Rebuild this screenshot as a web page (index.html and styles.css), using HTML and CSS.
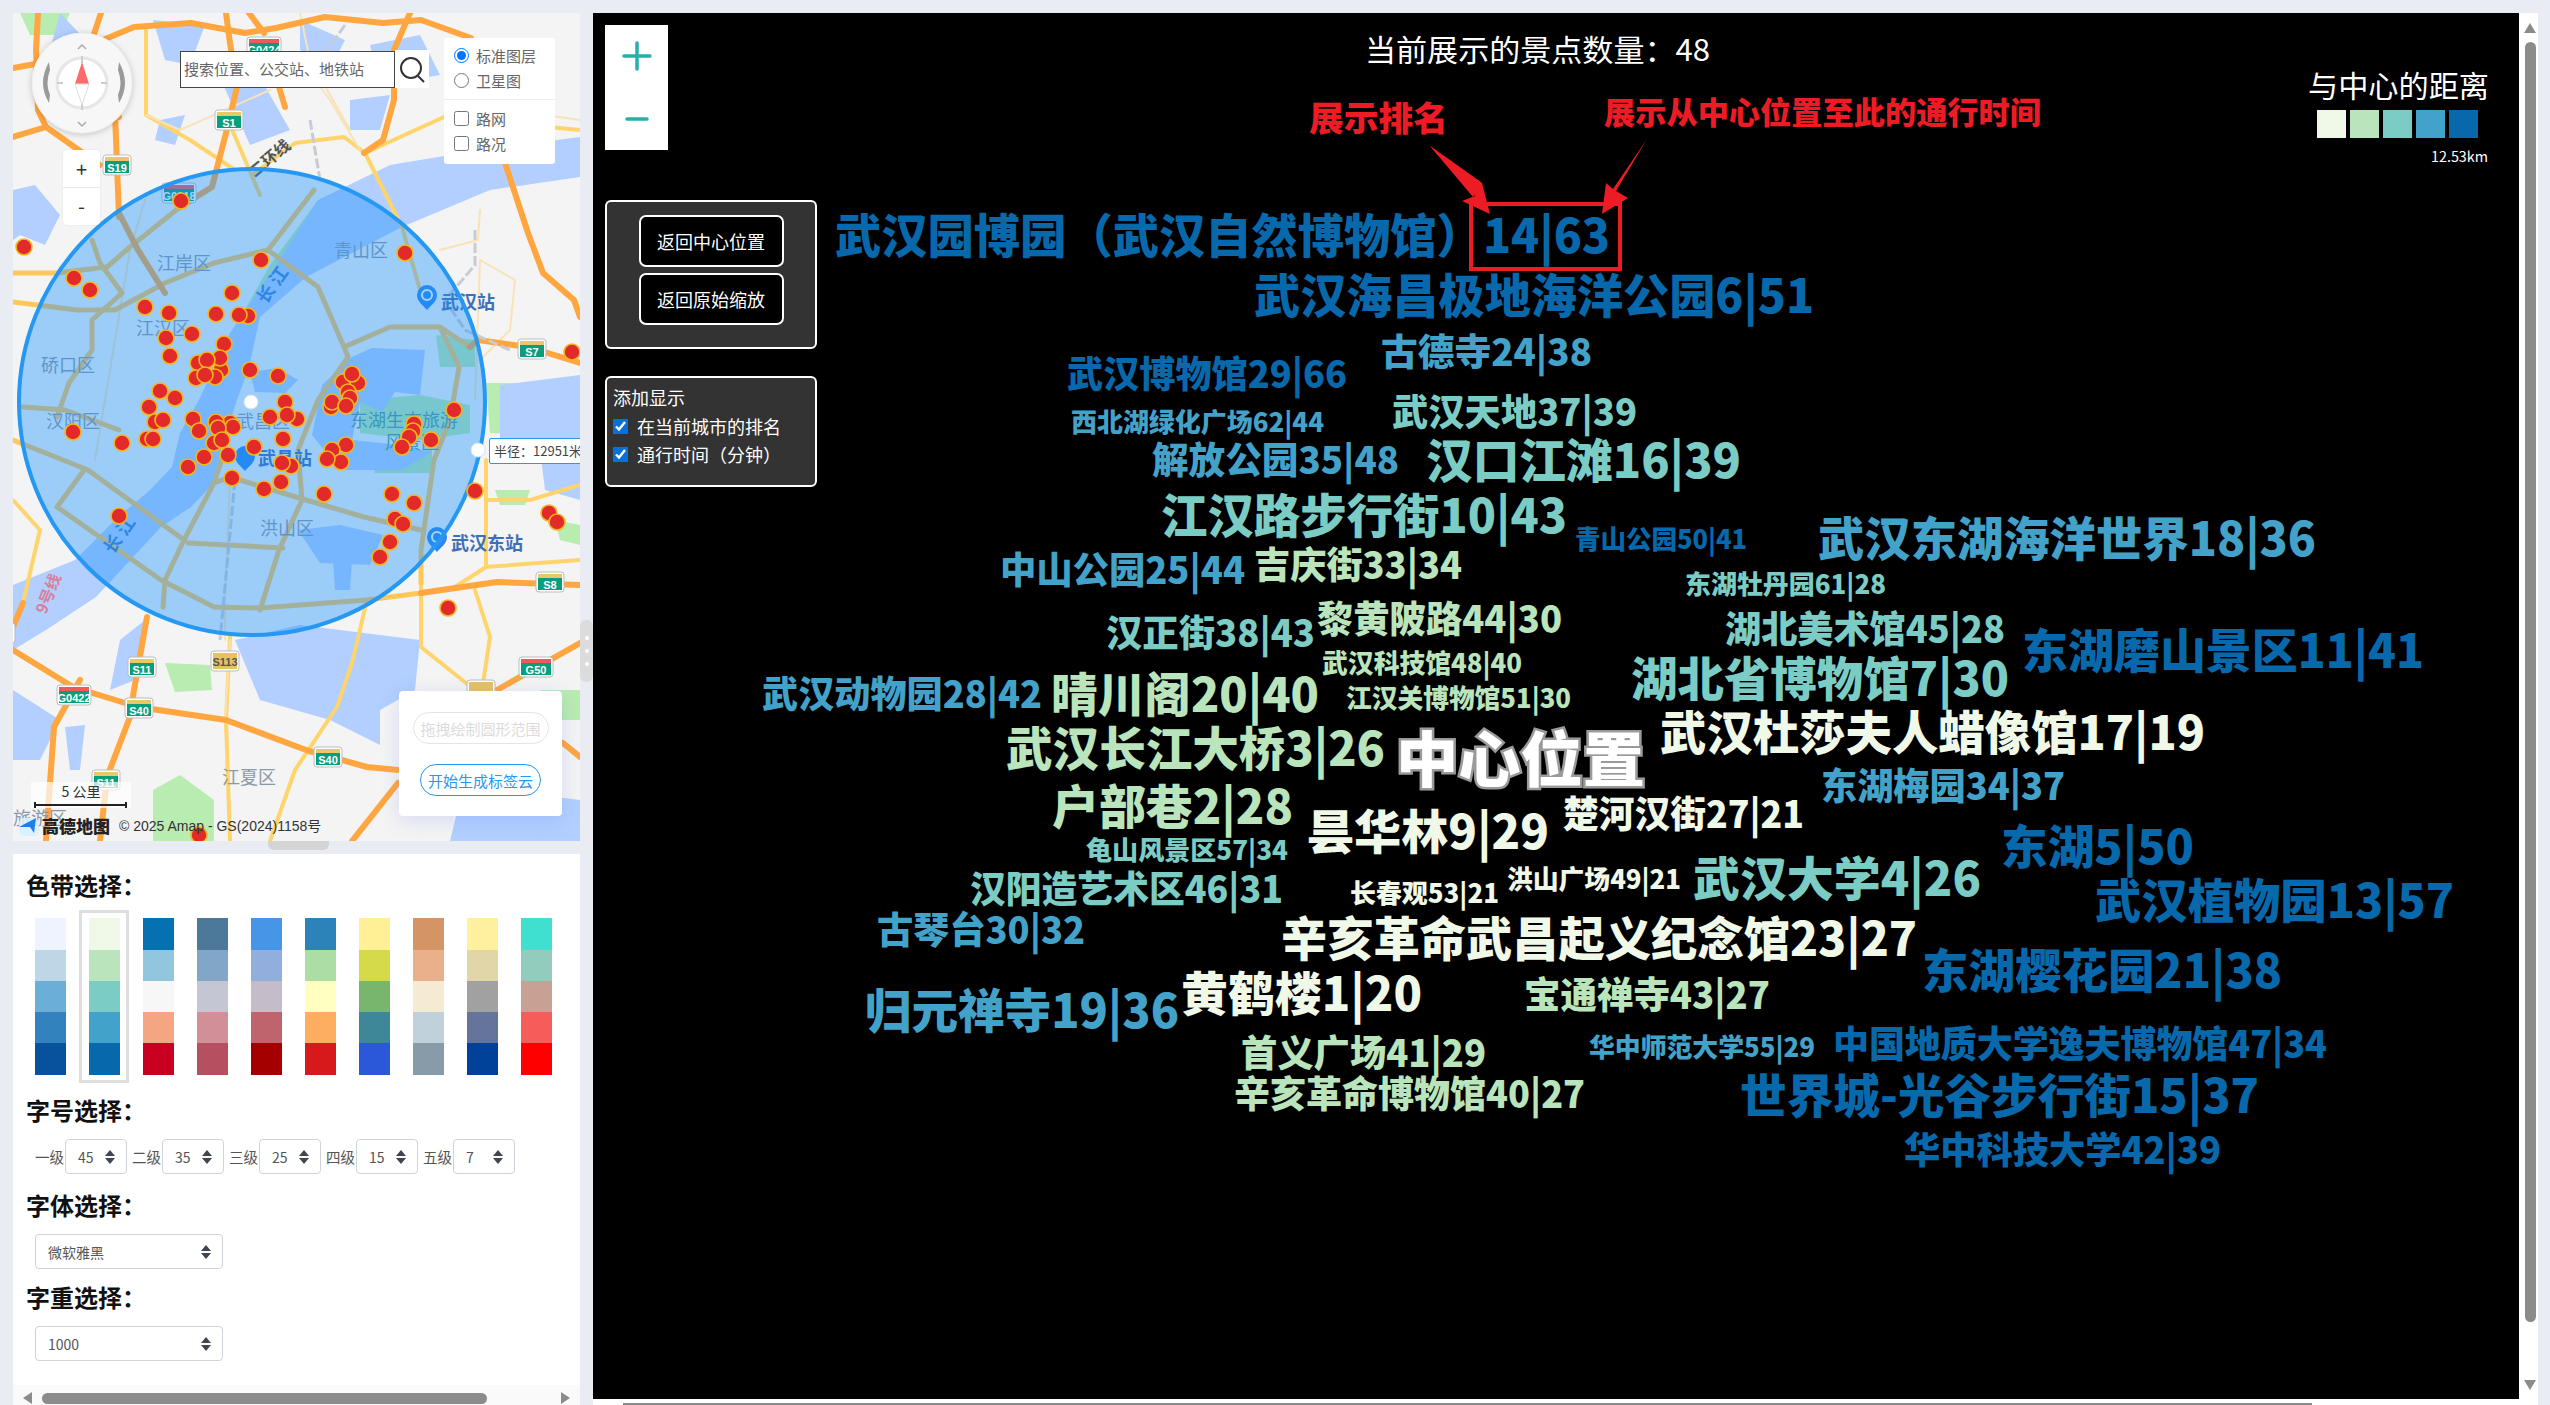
FILE: index.html
```html
<!DOCTYPE html>
<html lang="zh-CN">
<head>
<meta charset="utf-8">
<title>标签云</title>
<link rel="stylesheet" href="styles.css">
</head>
<body>
<div class="app">
  <div class="left">
    <div class="map">
      <svg class="map-svg" viewBox="13 13 567 828" width="567" height="828">
        <defs>
          <g id="sh-g"><rect class="sh-o" x="-14" y="-10" width="28" height="20" rx="3"/><rect class="sh-g" x="-12" y="-8" width="24" height="16"/><rect class="sh-y" x="-12" y="-8" width="24" height="4"/></g>
          <g id="sh-r"><rect class="sh-o" x="-17" y="-10" width="34" height="20" rx="3"/><rect class="sh-g" x="-15" y="-8" width="30" height="16"/><rect class="sh-r" x="-15" y="-8" width="30" height="4"/></g>
          <g id="sh-b"><rect class="sh-o" x="-14" y="-10" width="28" height="20" rx="3"/><rect class="sh-gold" x="-12" y="-8" width="24" height="16"/></g>
          <path id="pin" d="M0,13 C-3,9 -10,5 -10,-2 A10,10 0 1 1 10,-2 C10,5 3,9 0,13 Z"/>
        </defs>
        <rect class="land" x="13" y="13" width="567" height="828"/>
        <!-- 绿地 -->
        <path class="green" d="M486,383 L528,383 L535,412 L520,435 L490,433 Z M165,663 L210,665 L212,690 L175,692 Z M153,790 L180,775 L214,800 L214,841 L153,841 Z M540,690 L580,690 L580,720 L555,720 Z M495,490 L530,490 L525,505 L500,505 Z M555,520 L580,525 L580,545 L560,540 Z M20,13 L70,13 L60,35 L30,35 Z M318,200 L325,205 L285,268 L240,340 L228,340 L270,265 Z M360,400 L420,395 L470,405 L470,433 L420,440 L360,433 Z M436,335 L475,340 L475,367 L440,367 Z M364,450 L432,450 L432,473 L375,473 Z"/>
        <!-- 水系 -->
        <path class="water" d="M580,137 L480,150 L390,165 L318,200 L275,267 L230,333 L199,400 L180,433 L172,467 L150,490 L115,520 L75,560 L13,585 L13,650 L46,630 L96,597 L161,527 L191,507 L214,483 L226,433 L237,400 L249,367 L260,317 L306,277 L402,227 L490,190 L580,177 Z"/>
        <path class="water" d="M13,190 L35,185 L60,215 L45,245 L20,235 L13,240 Z M153,20 L205,25 L190,65 L165,60 Z M160,120 L185,115 L175,145 L155,140 Z M60,13 L105,60 L70,90 L50,50 Z M322,385 L352,357 L372,348 L425,350 L420,395 L395,392 L382,412 L360,402 L352,440 L400,445 L432,452 L402,470 L340,470 L312,435 Z M250,372 L278,368 L298,380 L285,393 L255,392 Z M298,530 L340,525 L383,535 L370,565 L320,563 Z M333,560 L352,560 L350,590 L335,590 Z M235,640 L300,625 L420,640 L415,690 L380,710 L380,745 L330,720 L260,700 Z M120,640 L145,620 L135,680 L110,690 Z M65,727 L85,725 L80,770 L70,770 Z M500,385 L580,375 L580,450 L530,460 L500,440 Z M460,800 L500,790 L580,800 L580,841 L450,841 Z M13,690 L60,720 L40,760 L13,760 Z M300,20 L345,40 L330,70 L300,50 Z M218,73 L250,60 L290,130 L250,145 Z M540,450 L580,460 L580,500 L545,490 Z M370,45 L420,35 L440,75 L380,85 Z M350,100 L390,95 L380,130 L350,130 Z"/>
        <!-- 道路 -->
        <g class="road-y">
          <path d="M230,637 L226,720 L230,841"/>
          <path d="M367,600 L352,663 L337,707 L295,770"/>
          <path d="M486,460 L486,567 L455,587"/>
          <path d="M475,590 L490,637 L482,690"/>
          <path d="M252,175 L295,143 L344,137 L365,153 L444,117 L580,130"/>
          <path d="M365,153 L402,227 L420,290"/>
          <path d="M146,27 L146,115 L190,140 L235,170"/>
          <path d="M421,583 L421,647 L471,687"/>
          <path d="M23,603 L40,530 L13,500"/>
          <path d="M486,500 L530,500 L580,485"/>
          <path d="M295,770 L270,841"/>
          <path d="M486,567 L580,560"/>
          <path d="M228,120 L260,195"/>
        </g>
        <g class="road-thin">
          <path d="M146,115 L180,130 L270,90"/>
          <path d="M230,480 L225,600 L225,640"/>
          <path d="M300,60 L330,100 L360,150"/>
          <path d="M95,460 L130,250 L145,200"/>
          <path d="M445,100 L510,110 L580,120"/>
          <path d="M440,250 L478,240 L480,210"/>
          <path d="M475,400 L480,260 L515,280 L510,330 L480,360"/>
          <path d="M300,13 L310,60 L350,130"/>
          <path d="M230,640 L225,720"/>
        </g>
        <g class="road-c">
          <path d="M180,207 L130,247 L107,267 L57,273 L13,273"/>
          <path d="M314,190 L268,250 L214,263 L165,283 L115,310 L77,310 L13,302"/>
          <path d="M92,240 L100,263 L122,293 L92,320 L92,350 L69,383 L57,417"/>
          <path d="M268,250 L318,287 L344,347 L348,357 L318,400 L298,450 L302,500 L279,550 L260,610"/>
          <path d="M344,347 L390,327 L440,327 L470,347"/>
          <path d="M440,327 L459,367 L450,420 L434,460 L421,550 L421,583"/>
          <path d="M23,407 L65,410 L119,430"/>
          <path d="M13,440 L38,450 L88,470 L184,540 L165,580 L163,607"/>
          <path d="M84,470 L57,507 L161,580 L214,607 L260,608 L367,600 L421,593"/>
          <path d="M188,543 L283,548"/>
          <path d="M214,483 L230,477 L306,500 L364,517 L421,530"/>
          <path d="M225,450 L214,483 L184,540"/>
        </g>
        <g class="road-o">
          <path d="M13,68 L46,62"/>
          <path d="M38,13 L36,50 L38,110 L46,127 L13,137"/>
          <path d="M46,127 L100,165"/>
          <path d="M101,13 L92,40 L103,40 L134,27 L191,23 L245,33 L276,28 L325,17 L383,23 L421,20 L471,38"/>
          <path d="M410,13 L394,50 L394,100 L383,140 L364,153"/>
          <path d="M226,13 L230,43 L237,87 L226,133 L212,187 L180,207"/>
          <path d="M249,13 L264,33"/>
          <path d="M279,87 L285,107"/>
          <path d="M119,117 L115,113 L119,217"/>
          <path d="M119,213 L138,250 L165,293"/>
          <path d="M470,347 L478,340 L528,347 L580,363"/>
          <path d="M421,593 L497,582 L580,585"/>
          <path d="M505,163 L528,233 L543,273 L574,300 L580,317"/>
          <path d="M13,650 L73,687 L138,707 L226,720 L306,750 L367,767 L398,770"/>
          <path d="M580,757 L563,743"/>
          <path d="M80,680 L54,727 L50,783 L46,841"/>
          <path d="M147,617 L134,690 L130,717 L107,777 L100,841"/>
          <path d="M580,643 L497,690 L470,720"/>
          <path d="M398,783 L352,841"/>
          <path d="M13,627 L23,603"/>
        </g>
        <path class="rail" d="M310,120 L320,180 M475,230 L475,265 L445,300 L465,330 L510,350 M235,480 L220,640 M345,25 L320,60"/>
        <!-- 地名 -->
        <text class="place" x="157" y="270">江岸区</text>
        <text class="place" x="334" y="257">青山区</text>
        <text class="place" x="136" y="335">江汉区</text>
        <text class="place" x="41" y="372">硚口区</text>
        <text class="place" x="46" y="428">汉阳区</text>
        <text class="place" x="260" y="535">洪山区</text>
        <text class="place" x="222" y="784">江夏区</text>
        <text class="place" x="13" y="825">旅游区</text>
        <text class="place-t" x="350" y="427">东湖生态旅游</text>
        <text class="place-t" x="385" y="449">风景区</text>
        <text class="place" x="236" y="428">武昌区</text>
        <text class="river" transform="translate(266,305) rotate(-55)">长 江</text>
        <text class="river" transform="translate(113,555) rotate(-55)">长 江</text>
        <text class="ring" transform="translate(255,178) rotate(-40)">二环线</text>
        <text class="metro" transform="translate(46,615) rotate(-68)">9号线</text>
        <use class="pin" href="#pin" x="427" y="297"/>
        <circle class="pin-c" cx="427" cy="295" r="5"/>
        <text class="station" x="441" y="309">武汉站</text>
        <use class="pin" href="#pin" x="245" y="458"/>
        <text class="station" x="258" y="465">武昌站</text>
        <use class="pin" href="#pin" x="437" y="539"/>
        <circle class="pin-c" cx="437" cy="537" r="5"/>
        <text class="station" x="451" y="550">武汉东站</text>
        <!-- 路牌 -->
        <g transform="translate(264,47)"><use href="#sh-r"/><text class="sh-t" y="7">G0424</text></g>
        <g transform="translate(229,120)"><use href="#sh-g"/><text class="sh-t" y="7">S1</text></g>
        <g transform="translate(117,165)"><use href="#sh-g"/><text class="sh-t" y="7">S19</text></g>
        <g transform="translate(179,193)"><use href="#sh-r"/><text class="sh-t" y="7">G0318</text></g>
        <g transform="translate(532,349)"><use href="#sh-g"/><text class="sh-t" y="7">S7</text></g>
        <g transform="translate(550,582)"><use href="#sh-g"/><text class="sh-t" y="7">S8</text></g>
        <g transform="translate(536,667)"><use href="#sh-r"/><text class="sh-t" y="7">G50</text></g>
        <g transform="translate(142,667)"><use href="#sh-g"/><text class="sh-t" y="7">S11</text></g>
        <g transform="translate(225,661)"><use href="#sh-b"/><text class="sh-k" y="5">S113</text></g>
        <g transform="translate(74,695)"><use href="#sh-r"/><text class="sh-t" y="7">G0422</text></g>
        <g transform="translate(139,708)"><use href="#sh-g"/><text class="sh-t" y="7">S40</text></g>
        <g transform="translate(328,757)"><use href="#sh-g"/><text class="sh-t" y="7">S40</text></g>
        <g transform="translate(106,780)"><use href="#sh-g"/><text class="sh-t" y="7">S11</text></g>
        <g transform="translate(481,690)"><use href="#sh-b"/></g>
        <g transform="translate(1,633)"><use href="#sh-g"/></g>
        <!-- 范围圆 -->
        <circle class="range" cx="252" cy="402" r="233"/>
        <!-- 景点 -->
        <g class="pois">
          <circle cx="181" cy="201" r="8"/><circle cx="24" cy="247" r="8"/><circle cx="261" cy="260" r="8"/><circle cx="405" cy="253" r="8"/><circle cx="74" cy="278" r="8"/><circle cx="90" cy="290" r="8"/><circle cx="232" cy="293" r="8"/><circle cx="145" cy="307" r="8"/><circle cx="169" cy="313" r="8"/><circle cx="216" cy="314" r="8"/><circle cx="248" cy="316" r="8"/><circle cx="239" cy="315" r="8"/><circle cx="166" cy="338" r="8"/><circle cx="192" cy="334" r="8"/><circle cx="224" cy="344" r="8"/><circle cx="170" cy="356" r="8"/><circle cx="221" cy="370" r="8"/><circle cx="198" cy="363" r="8"/><circle cx="220" cy="358" r="8"/><circle cx="207" cy="360" r="8"/><circle cx="196" cy="378" r="8"/><circle cx="215" cy="377" r="8"/><circle cx="205" cy="375" r="8"/><circle cx="250" cy="370" r="8"/><circle cx="278" cy="376" r="8"/><circle cx="343" cy="382" r="8"/><circle cx="358" cy="383" r="8"/><circle cx="352" cy="374" r="8"/><circle cx="348" cy="392" r="8"/><circle cx="350" cy="398" r="8"/><circle cx="331" cy="407" r="8"/><circle cx="332" cy="402" r="8"/><circle cx="346" cy="406" r="8"/><circle cx="160" cy="391" r="8"/><circle cx="175" cy="398" r="8"/><circle cx="149" cy="407" r="8"/><circle cx="285" cy="402" r="8"/><circle cx="454" cy="410" r="8"/><circle cx="572" cy="352" r="8"/><circle cx="193" cy="419" r="8"/><circle cx="155" cy="422" r="8"/><circle cx="163" cy="420" r="8"/><circle cx="230" cy="423" r="8"/><circle cx="233" cy="427" r="8"/><circle cx="216" cy="422" r="8"/><circle cx="218" cy="428" r="8"/><circle cx="270" cy="417" r="8"/><circle cx="297" cy="419" r="8"/><circle cx="287" cy="415" r="8"/><circle cx="199" cy="431" r="8"/><circle cx="73" cy="432" r="8"/><circle cx="414" cy="424" r="8"/><circle cx="413" cy="431" r="8"/><circle cx="409" cy="437" r="8"/><circle cx="431" cy="440" r="8"/><circle cx="283" cy="439" r="8"/><circle cx="147" cy="439" r="8"/><circle cx="153" cy="439" r="8"/><circle cx="122" cy="443" r="8"/><circle cx="254" cy="447" r="8"/><circle cx="214" cy="443" r="8"/><circle cx="222" cy="440" r="8"/><circle cx="346" cy="445" r="8"/><circle cx="332" cy="450" r="8"/><circle cx="402" cy="447" r="8"/><circle cx="188" cy="467" r="8"/><circle cx="204" cy="457" r="8"/><circle cx="228" cy="455" r="8"/><circle cx="291" cy="466" r="8"/><circle cx="282" cy="463" r="8"/><circle cx="341" cy="462" r="8"/><circle cx="327" cy="459" r="8"/><circle cx="232" cy="478" r="8"/><circle cx="264" cy="489" r="8"/><circle cx="281" cy="482" r="8"/><circle cx="324" cy="494" r="8"/><circle cx="392" cy="494" r="8"/><circle cx="414" cy="503" r="8"/><circle cx="475" cy="491" r="8"/><circle cx="549" cy="513" r="8"/><circle cx="557" cy="522" r="8"/><circle cx="119" cy="516" r="8"/><circle cx="395" cy="519" r="8"/><circle cx="403" cy="524" r="8"/><circle cx="390" cy="542" r="8"/><circle cx="380" cy="557" r="8"/><circle cx="448" cy="608" r="8"/><circle cx="199" cy="835" r="8"/>
        </g>
        <circle class="handle" cx="251" cy="402" r="7"/>
        <circle class="handle" cx="478" cy="450" r="7"/>
        <!-- 罗盘 -->
        <g transform="translate(82,83)">
          <circle class="cp-outer" r="50"/>
          <circle class="cp-inner" r="25"/>
          <path class="cp-tick" d="M0,-27 V-20 M0,20 V27 M-25,0 H-19 M19,0 H25"/>
          <path class="cp-n" d="M0,-21 L-7,1 H7 Z"/>
          <path class="cp-s" d="M0,22 L-7,1 H7 Z"/>
          <path class="cp-arc" d="M-33,-21 Q-45,0 -33,20 L-32,12 Q-37,0 -32,-13 Z"/>
          <path class="cp-arc" d="M37,-21 Q49,0 37,20 L36,12 Q41,0 36,-13 Z"/>
          <path class="cp-caret" d="M-4,-34 L0,-38 L4,-34 M-4,39 L0,43 L4,39"/>
        </g>
        <!-- 比例尺 -->
        <rect class="scale-bg" x="31" y="782" width="100" height="26"/>
        <text class="scale-t" x="81" y="797">5 公里</text>
        <path class="scale-l" d="M35,802 V808 M35,805 H126 M126,802 V808"/>
        <rect class="logo-bg" x="19" y="818" width="20" height="18" rx="5"/>
        <path class="logo-a" d="M36,818 L19,827 L30,827 L34,833 Z"/>
        <text class="logo-t" x="42" y="833">高德地图</text>
        <text class="copy" x="119" y="831">© 2025 Amap - GS(2024)1158号</text>
      </svg>

      <div class="search">
        <span class="search-text">搜索位置、公交站、地铁站</span>
        <span class="search-btn">
          <svg width="26" height="28" viewBox="0 0 26 28"><circle class="mag" cx="12" cy="13" r="10"/><path class="mag" d="M19,21 L25,27"/></svg>
        </span>
      </div>

      <div class="layers">
        <label class="layer"><input type="radio" name="base" checked>标准图层</label>
        <label class="layer"><input type="radio" name="base">卫星图</label>
        <div class="layer-sep"></div>
        <label class="layer"><input type="checkbox">路网</label>
        <label class="layer"><input type="checkbox">路况</label>
      </div>

      <div class="zoomer">
        <span class="zoomer-btn">+</span>
        <span class="zoomer-btn zoomer-minus">-</span>
      </div>

      <div class="radius">半径：12951米</div>

      <div class="actions">
        <button class="act act-off">拖拽绘制圆形范围</button>
        <button class="act act-on">开始生成标签云</button>
      </div>
    </div>

    <div class="h-grip"></div>

    <div class="panel">
      <div class="title first">色带选择：</div>
      <div class="ramps">
        <div class="ramp"><div class="bands"><i class="b1 p1a"></i><i class="p1b"></i><i class="p1c"></i><i class="p1d"></i><i class="b5 p1e"></i></div></div>
        <div class="ramp sel-ramp"><div class="bands"><i class="b1 p2a"></i><i class="p2b"></i><i class="p2c"></i><i class="p2d"></i><i class="b5 p2e"></i></div></div>
        <div class="ramp"><div class="bands"><i class="b1 p3a"></i><i class="p3b"></i><i class="p3c"></i><i class="p3d"></i><i class="b5 p3e"></i></div></div>
        <div class="ramp"><div class="bands"><i class="b1 p4a"></i><i class="p4b"></i><i class="p4c"></i><i class="p4d"></i><i class="b5 p4e"></i></div></div>
        <div class="ramp"><div class="bands"><i class="b1 p5a"></i><i class="p5b"></i><i class="p5c"></i><i class="p5d"></i><i class="b5 p5e"></i></div></div>
        <div class="ramp"><div class="bands"><i class="b1 p6a"></i><i class="p6b"></i><i class="p6c"></i><i class="p6d"></i><i class="b5 p6e"></i></div></div>
        <div class="ramp"><div class="bands"><i class="b1 p7a"></i><i class="p7b"></i><i class="p7c"></i><i class="p7d"></i><i class="b5 p7e"></i></div></div>
        <div class="ramp"><div class="bands"><i class="b1 p8a"></i><i class="p8b"></i><i class="p8c"></i><i class="p8d"></i><i class="b5 p8e"></i></div></div>
        <div class="ramp"><div class="bands"><i class="b1 p9a"></i><i class="p9b"></i><i class="p9c"></i><i class="p9d"></i><i class="b5 p9e"></i></div></div>
        <div class="ramp"><div class="bands"><i class="b1 p10a"></i><i class="p10b"></i><i class="p10c"></i><i class="p10d"></i><i class="b5 p10e"></i></div></div>
      </div>

      <div class="title t2">字号选择：</div>
      <div class="levels">
        <div class="level"><span class="lv">一级</span><span class="pick pick-s"><select><option>45</option></select></span></div>
        <div class="level"><span class="lv">二级</span><span class="pick pick-s"><select><option>35</option></select></span></div>
        <div class="level"><span class="lv">三级</span><span class="pick pick-s"><select><option>25</option></select></span></div>
        <div class="level"><span class="lv">四级</span><span class="pick pick-s"><select><option>15</option></select></span></div>
        <div class="level"><span class="lv">五级</span><span class="pick pick-s"><select><option>7</option></select></span></div>
      </div>

      <div class="title t3">字体选择：</div>
      <div class="block b3"><span class="pick pick-l"><select><option>微软雅黑</option></select></span></div>

      <div class="title t4">字重选择：</div>
      <div class="block b4"><span class="pick pick-l"><select><option>1000</option></select></span></div>

      <div class="hbar">
        <span class="tri-l"></span>
        <span class="hbar-thumb"></span>
        <span class="tri-r"></span>
      </div>
    </div>
  </div>

  <div class="v-grip"><i></i><i></i><i></i></div>

  <div class="right">
    <div class="right-row">
      <div class="cloud">
        <svg class="cloud-svg" viewBox="594 12 1926 1386" width="1926" height="1386">
          <text class="count" x="1366" y="60" textLength="345" lengthAdjust="spacingAndGlyphs">当前展示的景点数量：48</text>
          <text class="legend" x="2309" y="96" textLength="181" lengthAdjust="spacingAndGlyphs">与中心的距离</text>
          <rect class="c1" x="2318" y="109" width="29" height="28"/>
          <rect class="c2" x="2351" y="109" width="29" height="28"/>
          <rect class="c3" x="2384" y="109" width="29" height="28"/>
          <rect class="c4" x="2417" y="109" width="29" height="28"/>
          <rect class="c5" x="2450" y="109" width="29" height="28"/>
          <text class="legend-km" x="2432" y="161" textLength="57" lengthAdjust="spacingAndGlyphs">12.53km</text>

          <text class="note" x="1310" y="130" textLength="139" lengthAdjust="spacingAndGlyphs">展示排名</text>
          <text class="note note-s" x="1605" y="123" textLength="437" lengthAdjust="spacingAndGlyphs">展示从中心位置至此的通行时间</text>
          <rect class="note-box" x="1472" y="203" width="149" height="65"/>
          <path class="note-arrow" d="M1431,145 L1483,182 L1491,213 L1463,200 L1476,195 Z"/>
          <path class="note-arrow" d="M1431,145 L1474,196 L1483,182 Z"/>
          <path class="note-arrow" d="M1648,138 L1617,190 L1629,197 L1603,213 L1607,182 L1614,188 Z"/>

          <text class="w f47 c5" x="836" y="252" textLength="775" lengthAdjust="spacingAndGlyphs">武汉园博园（武汉自然博物馆）14|63</text>
          <text class="w f47 c5" x="1255" y="312" textLength="560" lengthAdjust="spacingAndGlyphs">武汉海昌极地海洋公园6|51</text>
          <text class="w f37 c4" x="1382" y="365" textLength="211" lengthAdjust="spacingAndGlyphs">古德寺24|38</text>
          <text class="w f37 c5" x="1068" y="387" textLength="280" lengthAdjust="spacingAndGlyphs">武汉博物馆29|66</text>
          <text class="w f26 c4" x="1072" y="431" textLength="253" lengthAdjust="spacingAndGlyphs">西北湖绿化广场62|44</text>
          <text class="w f37 c3" x="1393" y="425" textLength="245" lengthAdjust="spacingAndGlyphs">武汉天地37|39</text>
          <text class="w f37 c4" x="1153" y="473" textLength="247" lengthAdjust="spacingAndGlyphs">解放公园35|48</text>
          <text class="w f47 c3" x="1427" y="477" textLength="315" lengthAdjust="spacingAndGlyphs">汉口江滩16|39</text>
          <text class="w f47 c3" x="1162" y="532" textLength="406" lengthAdjust="spacingAndGlyphs">江汉路步行街10|43</text>
          <text class="w f26 c5" x="1576" y="548" textLength="172" lengthAdjust="spacingAndGlyphs">青山公园50|41</text>
          <text class="w f47 c4" x="1819" y="555" textLength="498" lengthAdjust="spacingAndGlyphs">武汉东湖海洋世界18|36</text>
          <text class="w f37 c4" x="1001" y="583" textLength="245" lengthAdjust="spacingAndGlyphs">中山公园25|44</text>
          <text class="w f37 c2" x="1255" y="578" textLength="208" lengthAdjust="spacingAndGlyphs">吉庆街33|34</text>
          <text class="w f26 c3" x="1686" y="593" textLength="201" lengthAdjust="spacingAndGlyphs">东湖牡丹园61|28</text>
          <text class="w f37 c3" x="1107" y="646" textLength="209" lengthAdjust="spacingAndGlyphs">汉正街38|43</text>
          <text class="w f37 c2" x="1318" y="632" textLength="245" lengthAdjust="spacingAndGlyphs">黎黄陂路44|30</text>
          <text class="w f37 c3" x="1726" y="642" textLength="280" lengthAdjust="spacingAndGlyphs">湖北美术馆45|28</text>
          <text class="w f47 c5" x="2023" y="667" textLength="402" lengthAdjust="spacingAndGlyphs">东湖磨山景区11|41</text>
          <text class="w f26 c2" x="1323" y="672" textLength="200" lengthAdjust="spacingAndGlyphs">武汉科技馆48|40</text>
          <text class="w f47 c3" x="1632" y="695" textLength="378" lengthAdjust="spacingAndGlyphs">湖北省博物馆7|30</text>
          <text class="w f37 c4" x="763" y="707" textLength="280" lengthAdjust="spacingAndGlyphs">武汉动物园28|42</text>
          <text class="w f47 c2" x="1052" y="711" textLength="268" lengthAdjust="spacingAndGlyphs">晴川阁20|40</text>
          <text class="w f26 c2" x="1347" y="707" textLength="225" lengthAdjust="spacingAndGlyphs">江汉关博物馆51|30</text>
          <text class="w f47 c2" x="1007" y="765" textLength="379" lengthAdjust="spacingAndGlyphs">武汉长江大桥3|26</text>
          <text class="center-w" x="1397" y="781" textLength="249" lengthAdjust="spacingAndGlyphs">中心位置</text>
          <text class="w f47 c1" x="1661" y="749" textLength="545" lengthAdjust="spacingAndGlyphs">武汉杜莎夫人蜡像馆17|19</text>
          <text class="w f37 c4" x="1822" y="799" textLength="244" lengthAdjust="spacingAndGlyphs">东湖梅园34|37</text>
          <text class="w f47 c2" x="1053" y="823" textLength="241" lengthAdjust="spacingAndGlyphs">户部巷2|28</text>
          <text class="w f37 c1" x="1564" y="827" textLength="241" lengthAdjust="spacingAndGlyphs">楚河汉街27|21</text>
          <text class="w f47 c1" x="1308" y="848" textLength="242" lengthAdjust="spacingAndGlyphs">昙华林9|29</text>
          <text class="w f26 c3" x="1087" y="859" textLength="202" lengthAdjust="spacingAndGlyphs">龟山风景区57|34</text>
          <text class="w f47 c5" x="2002" y="863" textLength="193" lengthAdjust="spacingAndGlyphs">东湖5|50</text>
          <text class="w f26 c1" x="1508" y="888" textLength="174" lengthAdjust="spacingAndGlyphs">洪山广场49|21</text>
          <text class="w f47 c3" x="1694" y="895" textLength="288" lengthAdjust="spacingAndGlyphs">武汉大学4|26</text>
          <text class="w f37 c3" x="971" y="902" textLength="313" lengthAdjust="spacingAndGlyphs">汉阳造艺术区46|31</text>
          <text class="w f26 c1" x="1351" y="902" textLength="149" lengthAdjust="spacingAndGlyphs">长春观53|21</text>
          <text class="w f47 c5" x="2096" y="917" textLength="359" lengthAdjust="spacingAndGlyphs">武汉植物园13|57</text>
          <text class="w f37 c4" x="878" y="943" textLength="208" lengthAdjust="spacingAndGlyphs">古琴台30|32</text>
          <text class="w f47 c1" x="1282" y="955" textLength="636" lengthAdjust="spacingAndGlyphs">辛亥革命武昌起义纪念馆23|27</text>
          <text class="w f47 c5" x="1923" y="987" textLength="360" lengthAdjust="spacingAndGlyphs">东湖樱花园21|38</text>
          <text class="w f37 c2" x="1525" y="1008" textLength="246" lengthAdjust="spacingAndGlyphs">宝通禅寺43|27</text>
          <text class="w f47 c1" x="1182" y="1010" textLength="241" lengthAdjust="spacingAndGlyphs">黄鹤楼1|20</text>
          <text class="w f47 c4" x="866" y="1027" textLength="314" lengthAdjust="spacingAndGlyphs">归元禅寺19|36</text>
          <text class="w f26 c4" x="1590" y="1056" textLength="226" lengthAdjust="spacingAndGlyphs">华中师范大学55|29</text>
          <text class="w f37 c5" x="1834" y="1057" textLength="494" lengthAdjust="spacingAndGlyphs">中国地质大学逸夫博物馆47|34</text>
          <text class="w f37 c2" x="1242" y="1066" textLength="245" lengthAdjust="spacingAndGlyphs">首义广场41|29</text>
          <text class="w f37 c2" x="1235" y="1107" textLength="351" lengthAdjust="spacingAndGlyphs">辛亥革命博物馆40|27</text>
          <text class="w f47 c5" x="1741" y="1112" textLength="519" lengthAdjust="spacingAndGlyphs">世界城-光谷步行街15|37</text>
          <text class="w f37 c5" x="1905" y="1163" textLength="317" lengthAdjust="spacingAndGlyphs">华中科技大学42|39</text>
        </svg>

        <div class="cloud-zoom">
          <span class="cz-btn"><svg width="30" height="30" viewBox="0 0 30 30"><path class="cz-icon" d="M15,2 V28 M2,15 H28"/></svg></span>
          <span class="cz-btn"><svg width="30" height="30" viewBox="0 0 30 30"><path class="cz-icon" d="M5,15 H25"/></svg></span>
        </div>

        <div class="cloud-tools">
          <div class="tool-box tool-buttons">
            <button class="tool-btn">返回中心位置</button>
            <button class="tool-btn">返回原始缩放</button>
          </div>
          <div class="tool-box tool-checks">
            <div class="tool-head">添加显示</div>
            <label class="tool-check"><input type="checkbox" checked>在当前城市的排名</label>
            <label class="tool-check"><input type="checkbox" checked>通行时间（分钟）</label>
          </div>
        </div>
      </div>
      <div class="vbar">
        <span class="tri-u"></span>
        <span class="vbar-thumb"></span>
        <span class="tri-d"></span>
      </div>
    </div>
    <div class="cloud-hbar"><span class="cloud-hbar-thumb"></span></div>
  </div>
</div>
</body>
</html>
```

FILE: styles.css
```css
* { box-sizing: border-box; }
html, body { margin: 0; height: 100%; overflow: hidden; }
body {
  background: #e9edf3;
  font-family: "Noto Sans CJK SC", "Liberation Sans", sans-serif;
  color: #111;
}
.app { display: flex; height: 1405px; padding: 13px 12px 0 13px; }
.left { width: 567px; display: flex; flex-direction: column; flex: none; }
.map { position: relative; width: 567px; height: 828px; overflow: hidden; flex: none; background: #f4f4f4; }
.map-svg { display: block; }

.land { fill: #f4f4f4; }
.green { fill: #b8ecb0; }
.water { fill: #b2cfff; }
.road-o path, .road-y path, .road-thin path, .road-c path { fill: none; stroke-linecap: round; stroke-linejoin: round; }
.road-o path { stroke: #ffa640; stroke-width: 6; }
.road-y path { stroke: #ffd46a; stroke-width: 4; }
.road-c path { stroke: #ffc75a; stroke-width: 5; }
.road-thin path { stroke: #f8e3b8; stroke-width: 2; }
.rail { fill: none; stroke: #c8ccd2; stroke-width: 3; stroke-dasharray: 10 3; }
.place { font-size: 18px; fill: #8d98a6; }
.place-t { font-size: 18px; fill: #4d9a96; }
.river { font-size: 18px; font-weight: 700; fill: #3b7fd0; }
.ring { font-size: 16px; font-weight: 700; fill: #555; }
.metro { font-size: 16px; font-weight: 700; fill: #d97f9c; }
.station { font-size: 18px; font-weight: 700; fill: #3d6fb8; }
.pin { fill: #2f86ee; }
.pin-c { fill: none; stroke: #fff; stroke-width: 2; }
.sh-o { fill: #fff; stroke: #b9bcc0; stroke-width: 1; }
.sh-g { fill: #0a9d7c; }
.sh-y { fill: #e8c868; }
.sh-r { fill: #ee5a5a; }
.sh-gold { fill: #e7c260; }
.sh-t { font-family: "Liberation Sans", sans-serif; font-size: 11px; font-weight: 700; fill: #fff; text-anchor: middle; }
.sh-k { font-family: "Liberation Sans", sans-serif; font-size: 11px; font-weight: 700; fill: #555; text-anchor: middle; }
.range { fill: #1890ff; fill-opacity: .4; stroke: #2598f3; stroke-width: 4; }
.pois circle { fill: #e22a2a; stroke: #f2b71f; stroke-width: 1.6; }
.handle { fill: #fff; stroke: #cfe4fb; stroke-width: 1; }
.cp-outer { fill: #f7f7f7; stroke: #eee; stroke-width: 1; filter: drop-shadow(0 1px 3px rgba(0,0,0,.2)); }
.cp-inner { fill: #fff; stroke: #e6e6e6; stroke-width: 3; }
.cp-tick { fill: none; stroke: #ccc; stroke-width: 2; }
.cp-n { fill: #ff6a6a; }
.cp-s { fill: #fff; stroke: #ddd; stroke-width: 1; }
.cp-arc { fill: #9a9a9a; }
.cp-caret { fill: none; stroke: #aaa; stroke-width: 1.5; }
.scale-bg { fill: #fff; fill-opacity: .7; }
.scale-t { font-size: 14px; fill: #333; text-anchor: middle; }
.scale-l { fill: none; stroke: #222; stroke-width: 2; }
.logo-bg { fill: #d9f1ff; fill-opacity: .9; }
.logo-a { fill: #1b7ff0; }
.logo-t { font-size: 17px; font-weight: 900; fill: #222; }
.copy { font-family: "Liberation Sans", "Noto Sans CJK SC", sans-serif; font-size: 14px; fill: #333; }

.search { position: absolute; left: 167px; top: 37px; display: flex; height: 38px; }
.search-text {
  width: 215px; height: 37px; margin-top: 1px;
  background: #fff; border: 1px solid #444; font-size: 15px; line-height: 34px; padding-left: 3px; color: #666;
  white-space: nowrap; overflow: hidden;
}
.search-btn { width: 34px; background: #fff; display: flex; align-items: center; justify-content: center; }
.mag { fill: none; stroke: #333; stroke-width: 2; }

.layers {
  position: absolute; left: 431px; top: 25px; width: 111px; height: 126px;
  background: #fff; border-radius: 3px; padding: 5px 0 0 10px;
}
.layer { display: flex; align-items: center; gap: 7px; height: 25px; font-size: 15px; color: #666; }
.layer input { margin: 0; width: 15px; height: 15px; flex: none; }
.layer-sep { height: 1px; background: #eee; margin: 6px 0 6px -10px; }

.zoomer {
  position: absolute; left: 50px; top: 137px; width: 37px; height: 75px;
  background: #fff; border-radius: 4px; display: flex; flex-direction: column; box-shadow: 0 0 2px rgba(0,0,0,.1);
}
.zoomer-btn { height: 37px; display: flex; align-items: center; justify-content: center; font-size: 20px; line-height: 1; color: #333; }
.zoomer-minus { border-top: 1px solid #e8e8e8; }

.radius {
  position: absolute; left: 476px; top: 425px; width: 110px; height: 26px;
  background: #fff; border: 1px solid #2598f3; border-radius: 2px; font-size: 13px; line-height: 24px; padding-left: 4px;
  color: #444; white-space: nowrap;
}

.actions {
  position: absolute; left: 386px; top: 678px; width: 163px; height: 125px;
  background: #fff; border-radius: 4px; box-shadow: 0 4px 20px rgba(90,110,230,.2);
  display: flex; flex-direction: column; align-items: center; padding-top: 21px; gap: 20px;
}
.act { height: 32px; border-radius: 16px; background: #fff; font: 15px "Noto Sans CJK SC", sans-serif; padding: 0; }
.act-off { width: 136px; border: 1px solid #e4e4e4; color: #dcdcdc; }
.act-on { width: 121px; border: 1px solid #2598f3; color: #2598f3; }

.h-grip { height: 13px; flex: none; position: relative; }
.h-grip::after {
  content: ""; position: absolute; left: 255px; top: 0; width: 61px; height: 9px;
  background: #d4d4d4; border-radius: 0 0 6px 6px;
}

.panel { background: #fff; flex: 1; position: relative; padding: 14px 0 0 13px; overflow: hidden; }
.title { height: 34px; line-height: 34px; font-size: 24px; font-weight: 700; color: #111; white-space: nowrap; }
.t2 { margin-top: 10px; }
.t3 { margin-top: 14px; }
.t4 { margin-top: 11px; }
.ramps { display: flex; gap: 4px; margin: 8px 0 0 -1px; }
.ramp { width: 50px; height: 173px; border: 3px solid transparent; display: flex; justify-content: center; padding-top: 5px; }
.sel-ramp { border-color: #dedede; }
.bands { width: 31px; display: flex; flex-direction: column; }
.bands i { display: block; height: 31px; }
.bands .b1, .bands .b5 { height: 32px; }

.p1a { background: #eff3ff; } .p1b { background: #bdd7e7; } .p1c { background: #6baed6; } .p1d { background: #3182bd; } .p1e { background: #08519c; }
.p2a { background: #f0f9e8; } .p2b { background: #bae4bc; } .p2c { background: #7bccc4; } .p2d { background: #43a2ca; } .p2e { background: #0868ac; }
.p3a { background: #0571b0; } .p3b { background: #92c5de; } .p3c { background: #f7f7f7; } .p3d { background: #f4a582; } .p3e { background: #ca0020; }
.p4a { background: #4c7899; } .p4b { background: #82a6c7; } .p4c { background: #c4c6d4; } .p4d { background: #d38f98; } .p4e { background: #b4505f; }
.p5a { background: #4695e6; } .p5b { background: #92aedc; } .p5c { background: #c4bdc9; } .p5d { background: #bf636c; } .p5e { background: #a50000; }
.p6a { background: #2b83ba; } .p6b { background: #abdda4; } .p6c { background: #ffffbf; } .p6d { background: #fdae61; } .p6e { background: #d7191c; }
.p7a { background: #fff095; } .p7b { background: #d5da4a; } .p7c { background: #78b56d; } .p7d { background: #3e8798; } .p7e { background: #2b57d9; }
.p8a { background: #d49466; } .p8b { background: #e9b08c; } .p8c { background: #f5ebd3; } .p8d { background: #c1d1db; } .p8e { background: #879ca8; }
.p9a { background: #fff0a0; } .p9b { background: #e0d6a8; } .p9c { background: #a1a1a1; } .p9d { background: #65749b; } .p9e { background: #00429a; }
.p10a { background: #40e0d0; } .p10b { background: #92ccbd; } .p10c { background: #c8a194; } .p10d { background: #f45d5a; } .p10e { background: #ff0000; }

.levels { display: flex; gap: 5px; margin: 12px 0 0 9px; }
.level { display: flex; align-items: center; gap: 1px; }
.lv { font-size: 14.5px; color: #555; width: 29px; white-space: nowrap; }
.block { margin: 11px 0 0 9px; }
.b3 { margin-top: 12px; }
.b4 { margin-top: 12px; }
.pick { position: relative; display: inline-block; height: 35px; vertical-align: top; }
.pick select {
  appearance: none; -webkit-appearance: none;
  width: 100%; height: 100%; border: 1px solid #ced4da; border-radius: 4px; background: #fff;
  font: 14px "Noto Sans CJK SC", sans-serif; color: #555; padding: 0 0 0 12px; outline: none;
}
.pick::before, .pick::after {
  content: ""; position: absolute; right: 12px; width: 0; height: 0;
  border-left: 5px solid transparent; border-right: 5px solid transparent;
}
.pick::before { top: 11px; border-bottom: 6px solid #3f4651; }
.pick::after { top: 19px; border-top: 6px solid #3f4651; }
.pick-s { width: 62px; }
.pick-l { width: 188px; }
.pick-l select { padding-left: 12px; }

.hbar {
  position: absolute; left: 0; right: 0; bottom: 0; height: 20px; background: #fafafa;
  display: flex; align-items: center; padding: 6px 10px 0;
}
.hbar-thumb { display: block; width: 445px; height: 11px; background: #8b8b8b; border-radius: 6px; margin-left: 10px; }
.tri-l { width: 0; height: 0; border-top: 6px solid transparent; border-bottom: 6px solid transparent; border-right: 9px solid #8b8b8b; }
.tri-r { width: 0; height: 0; border-top: 6px solid transparent; border-bottom: 6px solid transparent; border-left: 9px solid #8b8b8b; margin-left: 74px; }

.v-grip {
  flex: none; width: 13px; height: 62px; margin-top: 607px; background: #dcdcdc; border-radius: 6px;
  display: flex; flex-direction: column; align-items: center; justify-content: center; gap: 9px;
}
.v-grip i { display: block; width: 4px; height: 4px; border-radius: 50%; background: #fff; }

.right { flex: 1; min-width: 0; display: flex; flex-direction: column; }
.right-row { display: flex; flex: none; height: 1386px; }
.cloud { position: relative; width: 1926px; height: 1386px; background: #000; flex: none; overflow: hidden; }
.cloud-svg { display: block; }
.vbar { width: 19px; background: #fff; display: flex; flex-direction: column; align-items: center; padding-top: 10px; }
.tri-u { width: 0; height: 0; border-left: 6px solid transparent; border-right: 6px solid transparent; border-bottom: 10px solid #8b8b8b; margin-left: 3px; }
.vbar-thumb { display: block; width: 11px; height: 1280px; margin: 9px 0 0 3px; background: #8b8b8b; border-radius: 6px; }
.tri-d { width: 0; height: 0; border-left: 6px solid transparent; border-right: 6px solid transparent; border-top: 10px solid #8b8b8b; margin: 58px 0 0 3px; }
.cloud-hbar { height: 6px; background: #fff; margin-right: 0; padding: 4px 0 0 30px; }
.cloud-hbar-thumb { display: block; width: 1689px; height: 2px; background: #8b8b8b; }

.c1 { fill: #f0f9e8; } .c2 { fill: #bae4bc; } .c3 { fill: #7bccc4; } .c4 { fill: #43a2ca; } .c5 { fill: #0868ac; }
.w { font-weight: 900; }
.f47 { font-size: 47px; } .f37 { font-size: 37px; } .f26 { font-size: 26px; }
.center-w { font-size: 60px; font-weight: 900; fill: #fff; stroke: #9a9a9a; stroke-width: 5px; paint-order: stroke; }
.count { font-size: 30px; fill: #fff; }
.legend { font-size: 30px; fill: #fff; }
.legend-km { font-size: 14px; fill: #fff; }
.note { font-size: 34px; font-weight: 900; fill: #ed1c24; }
.note-s { font-size: 31px; }
.note-box { fill: none; stroke: #ed1c24; stroke-width: 4; }
.note-arrow { fill: #ed1c24; }

.cloud-zoom { position: absolute; left: 12px; top: 12px; width: 63px; height: 125px; background: #fff; display: flex; flex-direction: column; }
.cz-btn { flex: 1; display: flex; align-items: center; justify-content: center; }
.cz-icon { fill: none; stroke: #26b0a8; stroke-width: 3.5; stroke-linecap: round; }

.cloud-tools { position: absolute; left: 12px; top: 187px; width: 212px; display: flex; flex-direction: column; gap: 27px; }
.tool-box { background: #333; border: 2px solid #fff; border-radius: 6px; }
.tool-buttons { height: 149px; display: flex; flex-direction: column; align-items: center; gap: 6px; padding-top: 13px; }
.tool-btn {
  width: 145px; height: 52px; background: #000; border: 2px solid #fff; border-radius: 7px;
  color: #fff; font: 18px "Noto Sans CJK SC", sans-serif; padding: 0;
}
.tool-checks { height: 111px; padding: 5px 0 0 6px; color: #fff; font-size: 18px; }
.tool-head { height: 29px; line-height: 29px; }
.tool-check { display: flex; align-items: center; gap: 9px; height: 28px; white-space: nowrap; }
.tool-check input { margin: 0; width: 15px; height: 15px; accent-color: #0b6fd8; flex: none; }
```
